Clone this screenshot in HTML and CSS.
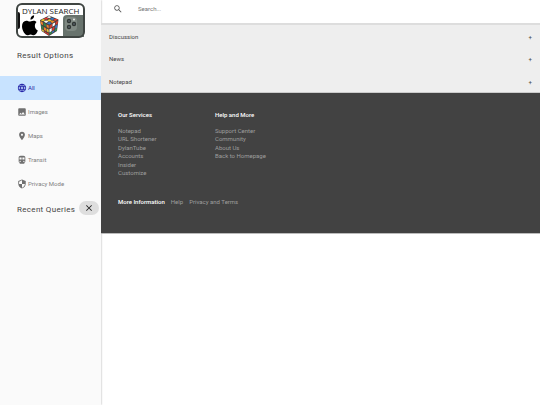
FILE: index.html
```html
<!DOCTYPE html>
<html lang="en">
<head>
<meta charset="utf-8">
<title>Dylan Search</title>
<link rel="stylesheet" href="styles.css">
</head>
<body>
<div class="layout">
  <aside class="drawer">
    <svg class="logo" viewBox="0 0 71 36" role="img" aria-label="Dylan Search">
      <rect x="2" y="1" width="67" height="33" rx="5" fill="#fff"/>
      <path d="M48 34V16q0-4 4-4h17v22z" fill="#68736d"/>
      <rect x="50" y="14" width="12" height="14" rx="4" fill="#7f8983"/>
      <circle cx="54" cy="18" r="2.200" fill="#303634"/><circle cx="54" cy="24" r="2.200" fill="#303634"/><circle cx="59" cy="21" r="2.200" fill="#303634"/>
      <circle cx="54" cy="18" r=".8" fill="#6a7580"/><circle cx="54" cy="24" r=".8" fill="#6a7580"/><circle cx="59" cy="21" r=".8" fill="#6a7580"/>
      <circle cx="59" cy="16.500" r="1" fill="#e8ebe7"/>
      <path d="M2 9h1q2 0 2 2v13q0 2-2 2H2z" fill="#111"/>
      <path d="M15.500 16.800c-.3-2.200 1.200-4 3.600-4.500.3 2.300-1.300 4.200-3.600 4.500zM21.500 19c-1.500-1.700-3.500-1.600-5.500-.7-1 .4-1.800.3-2.700-.1-3.500-1.400-6.300.8-6.300 5 0 4.600 3.200 9 5.400 9 1.100 0 1.800-.8 3.200-.8s2 .8 3.200.8c1.700 0 3.300-2.500 4-4.700-3.400-1.500-3.800-6.500-1.300-8.500z" fill="#000"/>
      <g class="cube">
      <path d="M25 17l9-4.500 9.500 4L42 28l-8 5-7.500-5z" fill="#484040"/>
      <path d="M25.700 17.200l2.500-1.200 2.300 1-2.500 1.200zM31.800 17.500l2.600-1.200 2.500 1-2.600 1.300z" fill="#f1c928"/>
      <path d="M28.800 15.700l2.400-1.100 2.400 1-2.400 1.200zM38 16.800l2.500-1.100 2.300.9-2.500 1.300z" fill="#e63b2e"/>
      <path d="M31.800 14.200l2.200-1.100 2.500 1-2.200 1.200zM28.700 18.500l2.400-1.100 2.500 1.100-2.500 1.400z" fill="#f7f7f2"/>
      <path d="M34.800 15.900l2.300-1.100 2.500 1-2.400 1.200zM31.800 20.200l2.500-1.300 2.400 1.100-2.500 1.500z" fill="#3879cb"/>
      <path d="M35 18.800l2.400-1.200 2.400 1-2.400 1.300z" fill="#f28b25"/>
      <path d="M25.500 18l2.200 1.200.4 3-2.200-1.300zM28.800 24l2.200 1.300.3 3-2.200-1.400zM31.500 21.400l2.200 1.200v3L31.700 24z" fill="#ee812b"/>
      <path d="M28.400 19.600l2.400 1.300.3 2.900-2.300-1.300zM26.100 22.300l2.100 1.200.4 3-2.100-1.300z" fill="#318446"/>
      <path d="M31.700 25.500l2 1.200v2.900l-2-1.300zM26.800 26.200l2.100 1.300.2 1.500-2-1.200z" fill="#e9c83a"/>
      <path d="M29.500 28l2 1.400.1 1.500-1.900-1.200zM31.900 29.500l1.800 1.100v1.700l-1.800-1.100z" fill="#d93b2f"/>
      <path d="M34.500 22.500l2.500-1.400-.1 2.900-2.400 1.500zM37.300 25l2.300-1.400-.3 2.900-2.100 1.400zM40.700 19l2.200-1.200-.3 2.900-2.200 1.300z" fill="#d83c30"/>
      <path d="M37.600 20.800l2.500-1.400-.3 2.900-2.300 1.400zM34.500 26.300l2.200-1.300v2.900l-2.200 1.500z" fill="#fff"/>
      <path d="M40.300 22.800l2.100-1.300-.3 2.900-2.100 1.300zM37.100 28.500l2.100-1.300-.2 1.800-1.900 1.300z" fill="#3a75be"/>
      <path d="M40 26.300l2-1.200-.2 2.500-2 1.300zM34.500 30l2.100-1.400v1.900l-2.100 1.300z" fill="#339250"/>
      </g>
      <text class="logo-text" x="7" y="11">DYLAN SEARCH</text>
      <rect x="2" y="1" width="67" height="33" rx="5" fill="none" stroke="#3f4542" stroke-width="2"/>
    </svg>
    <h2 class="drawer-title">Result Options</h2>
    <nav class="filters">
      <a class="filter active" href="#all"><svg viewBox="0 0 24 24"><path d="M11.990 2C6.470 2 2 6.480 2 12s4.470 10 9.990 10C17.520 22 22 17.520 22 12S17.520 2 11.990 2zm6.930 6h-2.950c-.32-1.250-.78-2.450-1.380-3.560 1.840.63 3.370 1.910 4.330 3.560zM12 4.040c.83 1.200 1.480 2.530 1.910 3.960h-3.820c.43-1.430 1.080-2.760 1.910-3.960zM4.260 14C4.100 13.360 4 12.690 4 12s.1-1.360.26-2h3.380c-.08.66-.14 1.320-.14 2s.06 1.340.14 2H4.260zm.82 2h2.950c.32 1.250.78 2.450 1.380 3.560-1.840-.63-3.370-1.900-4.330-3.560zm2.950-8H5.080c.96-1.660 2.490-2.930 4.330-3.560C8.810 5.550 8.350 6.750 8.030 8zM12 19.960c-.83-1.200-1.480-2.530-1.910-3.960h3.820c-.43 1.430-1.080 2.760-1.910 3.960zM14.340 14H9.660c-.09-.66-.16-1.320-.16-2s.07-1.350.16-2h4.680c.09.65.16 1.320.16 2s-.07 1.340-.16 2zm.25 5.560c.6-1.110 1.060-2.310 1.380-3.560h2.950c-.96 1.650-2.490 2.930-4.330 3.560zM16.360 14c.08-.66.14-1.320.14-2s-.06-1.340-.14-2h3.380c.16.640.26 1.310.26 2s-.1 1.360-.26 2h-3.380z"/></svg>All</a>
      <a class="filter" href="#images"><svg viewBox="0 0 24 24"><path d="M21 19V5c0-1.100-.9-2-2-2H5c-1.100 0-2 .9-2 2v14c0 1.100.9 2 2 2h14c1.100 0 2-.9 2-2zM8.500 13.500l2.500 3.010L14.500 12l4.500 6H5l3.500-4.500z"/></svg>Images</a>
      <a class="filter" href="#maps"><svg viewBox="0 0 24 24"><path d="M12 2C8.130 2 5 5.130 5 9c0 5.250 7 13 7 13s7-7.750 7-13c0-3.870-3.130-7-7-7zm0 9.500c-1.380 0-2.500-1.120-2.500-2.500s1.120-2.500 2.500-2.500 2.500 1.120 2.500 2.500-1.120 2.500-2.500 2.500z"/></svg>Maps</a>
      <a class="filter" href="#transit"><svg viewBox="0 0 24 24"><path d="M12 2c-4.420 0-8 .5-8 4v9.500C4 17.430 5.570 19 7.500 19L6 20.500v.5h12v-.5L16.500 19c1.930 0 3.500-1.570 3.500-3.500V6c0-3.500-3.580-4-8-4zM7.500 17c-.83 0-1.500-.67-1.500-1.500S6.670 14 7.500 14s1.500.67 1.500 1.500S8.330 17 7.500 17zm3.500-6H6V6h5v5zm5.500 6c-.83 0-1.500-.67-1.500-1.500s.67-1.500 1.500-1.500 1.500.67 1.500 1.500-.67 1.500-1.500 1.500zm1.500-6h-5V6h5v5z"/></svg>Transit</a>
      <a class="filter" href="#privacy"><svg viewBox="0 0 24 24"><path d="M12 1L3 5v6c0 5.550 3.840 10.740 9 12 5.160-1.260 9-6.450 9-12V5l-9-4zm0 10.990h7c-.53 4.120-3.280 7.790-7 8.940V12H5V6.300l7-3.110v8.800z"/></svg>Privacy Mode</a>
    </nav>
    <div class="recent">
      <h2 class="drawer-title">Recent Queries</h2>
      <button class="clear" type="button" aria-label="Clear recent queries"><svg viewBox="0 0 24 24"><path d="M19 6.410L17.590 5 12 10.590 6.410 5 5 6.410 10.590 12 5 17.590 6.410 19 12 13.410 17.590 19 19 17.590 13.410 12z"/></svg></button>
    </div>
  </aside>
  <div class="page">
    <header class="search">
      <label for="query"><svg viewBox="0 0 24 24" role="img" aria-label="Search"><path d="M15.500 14h-.79l-.28-.27C15.410 12.590 16 11.110 16 9.500 16 5.910 13.090 3 9.500 3S3 5.910 3 9.500 5.910 16 9.500 16c1.610 0 3.090-.59 4.230-1.570l.27.28v.79l5 4.990L20.490 19l-4.990-5zm-6 0C7.010 14 5 11.990 5 9.500S7.010 5 9.500 5 14 7.010 14 9.500 11.990 14 9.500 14z"/></svg></label>
      <input id="query" type="text" placeholder="Search...">
    </header>
    <main class="sections">
      <button class="section" type="button"><span>Discussion</span><span>+</span></button>
      <button class="section" type="button"><span>News</span><span>+</span></button>
      <button class="section" type="button"><span>Notepad</span><span>+</span></button>
    </main>
    <footer class="footer">
      <div class="columns">
        <section>
          <h3>Our Services</h3>
          <ul>
            <li><a href="#notepad">Notepad</a></li>
            <li><a href="#url">URL Shortener</a></li>
            <li><a href="#tube">DylanTube</a></li>
            <li><a href="#accounts">Accounts</a></li>
            <li><a href="#insider">Insider</a></li>
            <li><a href="#customize">Customize</a></li>
          </ul>
        </section>
        <section>
          <h3>Help and More</h3>
          <ul>
            <li><a href="#support">Support Center</a></li>
            <li><a href="#community">Community</a></li>
            <li><a href="#about">About Us</a></li>
            <li><a href="#home">Back to Homepage</a></li>
          </ul>
        </section>
      </div>
      <div class="more">
        <h3>More Information</h3>
        <a href="#help">Help</a>
        <a href="#terms">Privacy and Terms</a>
      </div>
    </footer>
  </div>
</div>
</body>
</html>
```
FILE: styles.css
```css
* { box-sizing: border-box; }
body {
  margin: 0;
  background: #fff;
  color: #424242;
  font: 6px/8px Roboto, "Liberation Sans", sans-serif;
}
h2, h3, ul { margin: 0; padding: 0; }
ul { list-style: none; }
a { color: inherit; text-decoration: none; }
svg { display: block; fill: currentColor; }
button, input { font: inherit; color: inherit; border: 0; }

.layout { display: flex; min-height: 100vh; }
.drawer {
  flex: 0 0 101px;
  min-width: 0;
  background: #fafafa;
  box-shadow: 0 0 2px rgba(0, 0, 0, .35);
  padding-top: 3px;
}
.logo { width: 71px; height: 36px; margin-left: 15px; }
.logo-text { font: 8px "Open Sans", sans-serif; fill: #222; }
.drawer-title {
  font-size: 8px;
  line-height: 12px;
  font-weight: 400;
  letter-spacing: 0.04em;
  white-space: nowrap;
  color: #444;
}
.drawer > .drawer-title { padding: 11px 0 14px 17px; }
.filter {
  display: flex;
  align-items: center;
  gap: 1px;
  height: 24px;
  padding-left: 17px;
  color: #808080;
}
.filter svg { width: 10px; height: 10px; color: #707070; }
.active, .active svg { color: #2424a8; }
.active { background: #c8e3ff; }
.recent {
  display: flex;
  align-items: end;
  justify-content: space-between;
  padding: 5px 2px 0 17px;
}
.clear {
  display: grid;
  place-items: center;
  flex: 0 0 20px;
  height: 14px;
  margin-bottom: 1px;
  padding: 0;
  border-radius: 7px;
  background: #dedede;
  color: #222;
}
.clear svg { width: 10px; height: 10px; }

.page { flex: 1; min-width: 0; }
.search {
  display: flex;
  align-items: center;
  gap: 15px;
  height: 25px;
  padding: 0 12px 6px;
  border-bottom: 2px solid #ddd;
  color: #555;
}
.search svg { width: 10px; height: 10px; }
.search input { flex: 1; padding: 0; background: none; outline: 0; }
.search input::placeholder { color: #757575; }
.sections {
  display: grid;
  grid-auto-rows: 23px 22px;
  background: #eee;
  box-shadow: inset 0 -1px #ccc;
}
.section {
  display: flex;
  align-items: center;
  justify-content: space-between;
  padding: 0 8px;
  background: none;
  color: #444;
}
.footer {
  padding: 18px 17px 27px;
  background: #424242;
  color: #9e9e9e;
  border-bottom: 1px solid #bbb;
}
.footer h3 { font-size: 6px; line-height: 8px; font-weight: 500; color: #fff; }
.columns { display: flex; gap: 17px; }
.columns section { width: 80px; }
.columns ul { display: grid; grid-auto-rows: 8px 9px; margin-top: 8px; }
.more { display: flex; gap: 6px; margin-top: 20px; }
```
